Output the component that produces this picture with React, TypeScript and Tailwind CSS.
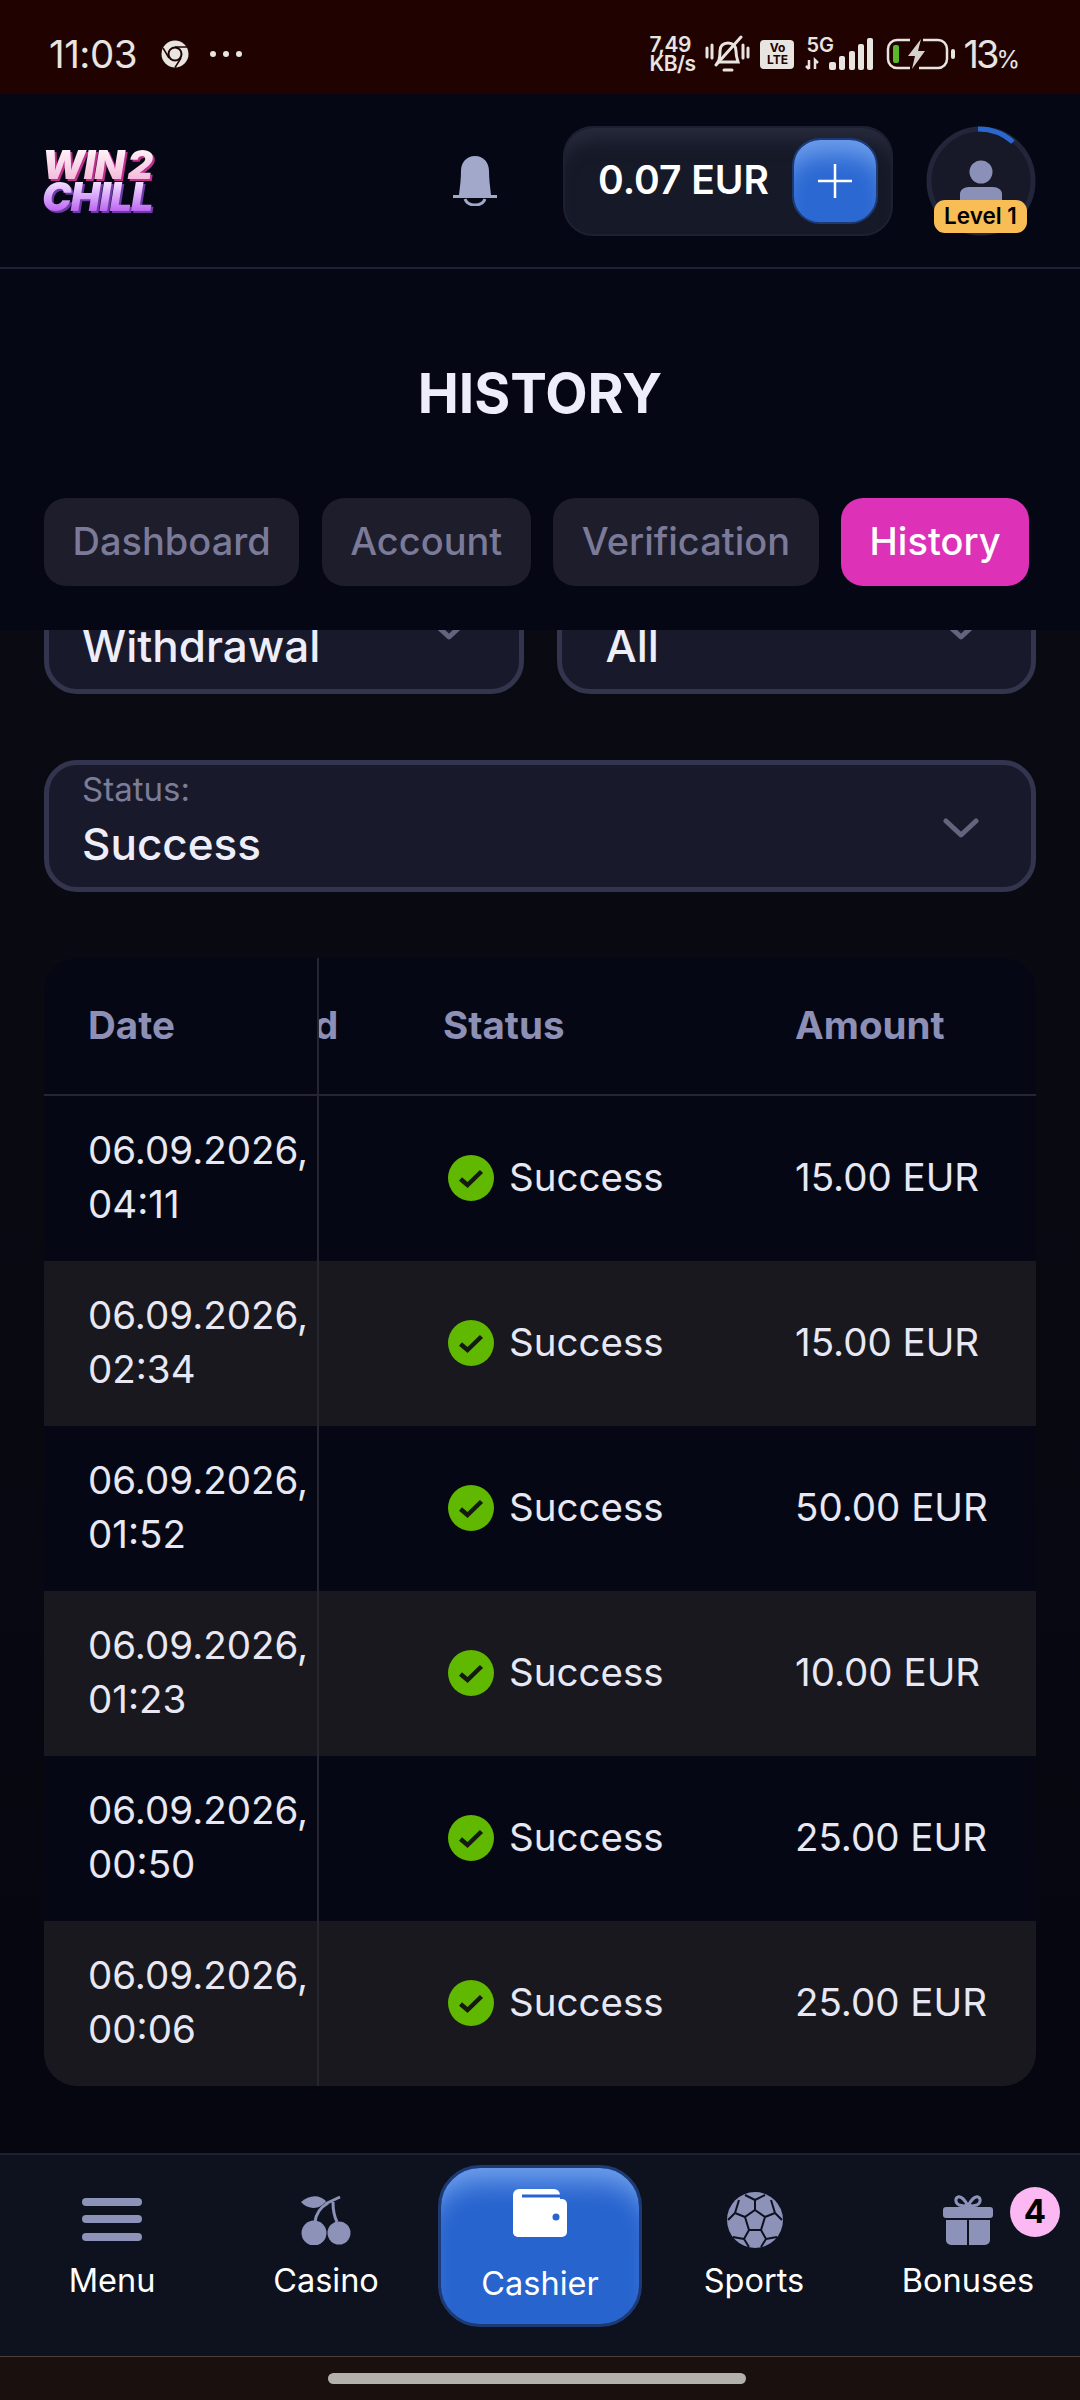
const rows = [
  { day: "06.09.2026,", time: "04:11", amount: "15.00 EUR" },
  { day: "06.09.2026,", time: "02:34", amount: "15.00 EUR" },
  { day: "06.09.2026,", time: "01:52", amount: "50.00 EUR" },
  { day: "06.09.2026,", time: "01:23", amount: "10.00 EUR" },
  { day: "06.09.2026,", time: "00:50", amount: "25.00 EUR" },
  { day: "06.09.2026,", time: "00:06", amount: "25.00 EUR" },
];

const tabs = ["Dashboard", "Account", "Verification"];

function Chevron() {
  return (
    <svg width="36" height="20" viewBox="0 0 36 20" fill="none">
      <path d="M3 3l15 14L33 3" stroke="#64647c" strokeWidth="5" strokeLinecap="round" strokeLinejoin="round" />
    </svg>
  );
}

function StatusBar() {
  return (
    <div className="flex h-[94px] shrink-0 items-center justify-between bg-[#200300] pl-[49px] pr-[60px] pt-[14px] text-[#e8e4e0]">
      <div className="flex items-center">
        <span className="text-[38.5px] leading-none tracking-[-0.5px]">11:03</span>
        <svg className="ml-[24px]" width="28" height="28" viewBox="0 0 28 28">
          <circle cx="14" cy="14" r="13.5" fill="#e8e4e0" />
          <circle cx="14" cy="14" r="7.5" fill="#200300" />
          <circle cx="14" cy="14" r="5.5" fill="#e8e4e0" />
          <path d="M14 7h12M8 18L2 8M20 18l-6 9.5" stroke="#200300" strokeWidth="1.5" />
        </svg>
        <div className="ml-[21px] flex gap-[7px]">
          <span className="h-[6px] w-[6px] rounded-full bg-[#e8e4e0]" />
          <span className="h-[6px] w-[6px] rounded-full bg-[#e8e4e0]" />
          <span className="h-[6px] w-[6px] rounded-full bg-[#e8e4e0]" />
        </div>
      </div>
      <div className="flex items-center">
        <div className="flex flex-col text-[21px] font-semibold leading-[19px] tracking-[-0.5px]">
          <span>7,49</span>
          <span>KB/s</span>
        </div>
        <svg className="ml-[10px]" width="45" height="38" viewBox="0 0 45 38" fill="none" stroke="#e8e4e0" strokeWidth="3">
          <path d="M13 27c2-3 2-7 2-11 0-5 3-8 8-8s8 3 8 8c0 4 1 8 2 11z" />
          <path d="M11 30L36 2" strokeLinecap="round" />
          <path d="M19 35h8M2 13v9M7 10v13M43 13v9M38 10v13" strokeLinecap="round" />
        </svg>
        <div className="ml-[10px] flex h-[29px] w-[34px] flex-col items-center justify-center rounded-[4px] bg-[#e8e4e0] text-[12px] font-bold leading-[12px] text-[#200300]">
          <span>Vo</span>
          <span>LTE</span>
        </div>
        <div className="relative ml-[10px] h-[33px] w-[70px]">
          <span className="absolute left-[2px] top-[-3px] text-[20px] font-semibold leading-[20px]">5G</span>
          <svg className="absolute left-0 top-0" width="70" height="33" viewBox="0 0 70 33" fill="#e8e4e0">
            <rect x="25" y="24" width="7" height="8" rx="2" />
            <rect x="35" y="18" width="6" height="14" rx="2" />
            <rect x="45" y="13" width="6" height="19" rx="2" />
            <rect x="54" y="6" width="6" height="26" rx="2" />
            <rect x="63" y="0" width="6" height="32" rx="2" />
            <path d="M5 22v9M5 31l-3-3M11 31v-9l3 3" stroke="#e8e4e0" strokeWidth="2.5" fill="none" />
          </svg>
        </div>
        <svg className="ml-[12px]" width="70" height="32" viewBox="0 0 70 32" fill="none">
          <path d="M24 2H11a9 9 0 0 0-9 9v10a9 9 0 0 0 9 9h13M37 2h15a9 9 0 0 1 9 9v10a9 9 0 0 1-9 9H33" stroke="#e8e4e0" strokeWidth="2.5" />
          <rect x="7" y="7" width="6" height="18" rx="2" fill="#5cb82a" />
          <path d="M35 1L22 18h7l-3 13 13-18h-7z" fill="#d5d2ce" />
          <rect x="65" y="11" width="4" height="10" rx="2" fill="#e8e4e0" />
        </svg>
        <div className="ml-[7px] flex items-baseline text-[#e8e4e0]">
          <span className="text-[38px] leading-none tracking-[-3px]">13</span>
          <span className="text-[24px] leading-none">%</span>
        </div>
      </div>
    </div>
  );
}

function Logo() {
  const cls =
    "block bg-clip-text text-transparent text-[39.5px] font-black italic leading-[32px] tracking-[-1px] [word-spacing:-3px]";
  return (
    <div className="ml-[-2px] flex w-[114px] flex-col whitespace-nowrap font-[Inter,sans-serif]">
      <span className={`${cls} bg-gradient-to-b from-[#fff4f8] to-[#f3b8da] drop-shadow-[2px_2px_0_#c02e8e]`}>
        WIN 2
      </span>
      <span className={`${cls} bg-gradient-to-b from-[#f6e2ff] to-[#b95cf0] drop-shadow-[2px_2px_0_#6d3aa8]`}>
        CHILL
      </span>
    </div>
  );
}

function Header() {
  return (
    <div className="flex h-[175px] shrink-0 items-center border-b-[2px] border-[#1f2033] bg-[#050814] pl-[44px] pr-[44px]">
      <Logo />
      <svg className="ml-[297px]" width="44" height="50" viewBox="0 0 44 50" fill="none">
        <path d="M22 0c9 0 14 7 14 15 0 8 1 15 2 24h6v3H0v-3h6c1-9 2-16 2-24C8 7 13 0 22 0z" fill="#a1a8c9" />
        <path d="M12 43c2 5 6 6 10 6s8-1 10-6" stroke="#a1a8c9" strokeWidth="3" />
      </svg>
      <div className="ml-[66px] flex h-[110px] w-[330px] items-center justify-between rounded-[30px] border-[2px] border-[#1d2032] bg-[#161928] pl-[33px] pr-[13px] shadow-[inset_0_22px_20px_-12px_#2a2d3f]">
        <span className="text-[39px] font-semibold text-white">0.07 EUR</span>
        <div className="flex h-[86px] w-[86px] items-center justify-center rounded-[28px] border-[2px] border-[#1e3a72] bg-[#2b68d2] shadow-[inset_0_26px_24px_-12px_#6f9fec]">
          <svg width="34" height="34" viewBox="0 0 34 34" stroke="#fff" strokeWidth="2.5">
            <path d="M17 0v34M0 17h34" />
          </svg>
        </div>
      </div>
      <div className="relative ml-[33px] h-[110px] w-[110px]">
        <svg width="110" height="110" viewBox="0 0 110 110" fill="none">
          <circle cx="55" cy="55" r="52" fill="#171928" stroke="#23263a" strokeWidth="5" />
          <path d="M52 3a52 52 0 0 1 35 13" stroke="#2a68d0" strokeWidth="5" />
          <circle cx="55" cy="46" r="11.5" fill="#8b90b8" />
          <path d="M34 76v-8c0-4 4-7 9-7h24c5 0 9 3 9 7v8z" fill="#8b90b8" />
        </svg>
        <div className="absolute left-[8px] top-[74px] flex h-[33px] w-[93px] items-center justify-center rounded-[11px] bg-[#f8bd55] text-[22.5px] font-semibold text-black">
          Level 1
        </div>
      </div>
    </div>
  );
}

function Select({ label, value, className, inner }: { label: string; value: string; className?: string; inner?: string }) {
  return (
    <div className={`relative h-[132px] shrink-0 rounded-[33px] border-[5px] border-[#33344d] bg-[#181a2b] pl-[33px] ${className ?? ""}`}>
      <div className={inner}>
        <div className="pt-[4px] text-[33px] leading-[40px] text-[#7c7d99]">{label}</div>
        <div className="mt-[7px] text-[44px] font-medium leading-[56px] text-[#eeeefa]">{value}</div>
      </div>
      <div className="absolute right-[52px] top-[53px]">
        <Chevron />
      </div>
    </div>
  );
}

function CheckBadge() {
  return (
    <svg width="46" height="46" viewBox="0 0 46 46" fill="none">
      <circle cx="23" cy="23" r="23" fill="#60b800" />
      <path d="M12.5 24l7 6L33.5 16.5" stroke="#141a12" strokeWidth="4.5" />
    </svg>
  );
}

function Table() {
  return (
    <div className="mt-[66px] overflow-hidden rounded-[33px] bg-[#050814]">
      <div className="grid h-[138px] grid-cols-[275px_125px_352px_240px] items-center border-b-[2px] border-[#25262f] text-[38.5px] font-bold text-[#8d90b4]">
        <div className="flex h-full items-center border-r-[2px] border-[#25262f] pl-[44px]">Date</div>
        <div className="overflow-hidden">
          <span className="ml-[-5px] block">d</span>
        </div>
        <div className="-ml-[1px]">Status</div>
        <div className="-ml-[1px]">Amount</div>
      </div>
      {rows.map((r, i) => (
        <div
          key={i}
          className={`grid h-[165px] grid-cols-[275px_125px_352px_240px] items-center text-[38.5px] leading-[54px] text-[#e8e8f5] ${i % 2 === 1 ? "bg-[#18181e]" : ""}`}
        >
          <div className="flex h-full flex-col justify-center whitespace-nowrap border-r-[2px] border-[#25262f] pb-[4px] pl-[44px]">
            <span>{r.day}</span>
            <span>{r.time}</span>
          </div>
          <div />
          <div className="flex items-center gap-[15px] pb-[2px] pl-[4px]">
            <CheckBadge />
            <span className="pb-[1px]">Success</span>
          </div>
          <div className="-ml-[1px] whitespace-nowrap pb-[3px]">{r.amount}</div>
        </div>
      ))}
    </div>
  );
}

function NavItem({ label, icon, badge }: { label: string; icon: React.ReactNode; badge?: string }) {
  return (
    <div className="relative flex h-full flex-col items-center">
      <div className="flex h-[66px] items-end">{icon}</div>
      <span className="mt-[14px] text-[32.5px] leading-[44px] text-white">{label}</span>
      {badge && (
        <span className="absolute left-[149px] top-[8px] flex h-[50px] w-[50px] items-center justify-center rounded-full bg-[#fbb8f2] text-[33px] font-bold text-black">
          {badge}
        </span>
      )}
    </div>
  );
}

function BottomNav() {
  return (
    <div className="grid h-[203px] shrink-0 grid-cols-5 border-t-[2px] border-[#1e2033] bg-[#0e111e] px-[5px] pt-[24px]">
      <NavItem
        label="Menu"
        icon={
          <svg width="60" height="43" viewBox="0 0 60 43" fill="#8d92b8" className="mb-[4px]">
            <rect y="0" width="60" height="8" rx="4" />
            <rect y="17" width="60" height="8" rx="4" />
            <rect y="35" width="60" height="8" rx="4" />
          </svg>
        }
      />
      <NavItem
        label="Casino"
        icon={
          <svg width="50" height="50" viewBox="0 0 50 50" fill="#8d92b8">
            <circle cx="13" cy="38" r="12.5" />
            <circle cx="38" cy="38" r="11.5" />
            <path d="M0 7C8 0 18-1 25 6 20 14 8 16 0 7z" />
            <path d="M14 27c1-9 6-15 13-19M36 27c-3-6-4-12-4-20M24 9l15-7" fill="none" stroke="#8d92b8" strokeWidth="3" />
          </svg>
        }
      />
      <div className="relative flex h-full justify-center">
        <div className="mt-[-14px] flex h-[162px] w-[204px] flex-col items-center rounded-[42px] border-[3px] border-[#1e3a72] bg-[#2864ce] pt-[21px] shadow-[inset_0_30px_26px_-16px_#6f9fec]">
          <svg width="54" height="48" viewBox="0 0 54 48" fill="#fff">
            <rect x="0" y="0" width="47" height="48" rx="6" />
            <rect x="0" y="10" width="54" height="38" rx="5" />
            <path d="M9 7h38" stroke="#2864ce" strokeWidth="3" />
            <circle cx="43" cy="28" r="3.5" fill="#2864ce" />
          </svg>
          <span className="mt-[25px] text-[32.5px] leading-[44px] text-white">Cashier</span>
        </div>
      </div>
      <NavItem
        label="Sports"
        icon={
          <svg width="56" height="56" viewBox="0 0 56 56" className="mb-[-3px] ml-[2px]">
            <circle cx="28" cy="28" r="28" fill="#8d92b8" />
            <path
              d="M28 18l10 7-4 13H22l-4-13zM28 18V8M28 8l-10-5M28 8l10-5M38 25l10-4M48 21l-4-13M48 21l7 7M34 38l5 9M39 47l11-2M39 47l-5 8M22 38l-5 9M17 47L6 45M17 47l5 8M18 25L8 21M8 21l4-13M8 21l-7 7"
              fill="none"
              stroke="#0e111e"
              strokeWidth="2"
            />
          </svg>
        }
      />
      <NavItem
        label="Bonuses"
        badge="4"
        icon={
          <svg width="50" height="50" viewBox="0 0 50 50" fill="#8d92b8">
            <rect x="0" y="12" width="50" height="11" rx="3" />
            <path d="M3 25h21v25H8a5 5 0 0 1-5-5zM26 25h21v20a5 5 0 0 1-5 5H26z" />
            <path d="M25 11c-3-6-7-10-10-9s-3 6 1 8c3 1 6 1 9 1zM25 11c3-6 7-10 10-9s3 6-1 8c-3 1-6 1-9 1z" fill="none" stroke="#8d92b8" strokeWidth="3" />
          </svg>
        }
      />
    </div>
  );
}

export default function App() {
  return (
    <div className="flex h-[2400px] w-[1080px] flex-col overflow-hidden bg-[#090a12] font-[Inter,sans-serif]">
      <StatusBar />
      <Header />
      <div className="flex h-[361px] shrink-0 flex-col items-center bg-[#050814] px-[44px]">
        <h1 className="mt-[91px] text-[55px] font-bold leading-[66px] text-[#eeeefa]">HISTORY</h1>
        <div className="mt-[72px] flex w-full gap-[22.5px]">
          {tabs.map((t) => (
            <div key={t} className="flex h-[88px] items-center rounded-[22px] bg-[#1d1d2c] px-[28.5px] pb-[2px] text-[38px] font-medium text-[#7b7a98]">
              {t}
            </div>
          ))}
          <div className="flex h-[88px] items-center rounded-[22px] bg-[#dd31b8] px-[28.5px] pb-[2px] text-[38px] font-medium text-white">
            History
          </div>
        </div>
      </div>
      <div className="min-h-0 flex-1 overflow-hidden bg-gradient-to-b from-[#0a0b12] to-[#05060f] px-[44px]">
        <div className="flex h-[64px] items-end gap-[33px] overflow-hidden">
          <Select label="Type:" value="Withdrawal" className="flex-1" />
          <Select label="Currency:" value="All" className="flex-1" inner="ml-[11px]" />
        </div>
        <div className="mt-[66px]">
          <Select label="Status:" value="Success" />
        </div>
        <Table />
      </div>
      <BottomNav />
      <div className="flex h-[44px] shrink-0 justify-center border-t-[1px] border-[#4a3f3c] bg-[#1a100e] pt-[16px]">
        <div className="mr-[7px] h-[11px] w-[418px] rounded-full bg-[#b4b1ad]" />
      </div>
    </div>
  );
}
